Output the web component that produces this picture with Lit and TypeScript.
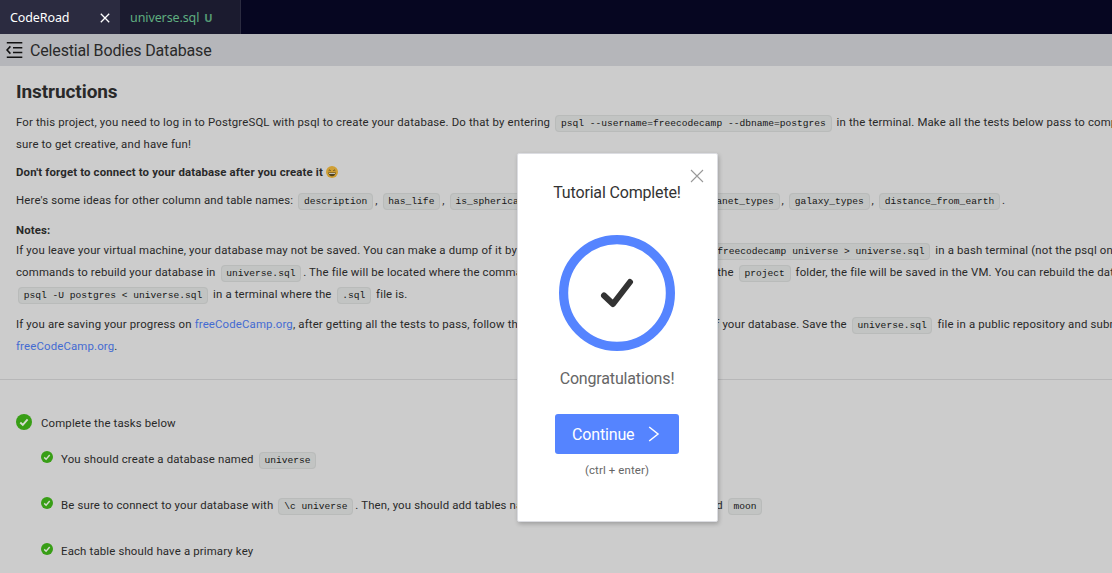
import { LitElement, html, css, svg } from "lit";
import { customElement, property } from "lit/decorators.js";

@customElement("done-badge")
class DoneBadge extends LitElement {
  @property({ type: Number }) size = 12;
  static styles = css`
    :host { display: block; line-height: 0; }
  `;
  render() {
    return html`<svg width=${this.size} height=${this.size} viewBox="0 0 16 16">
      ${svg`<circle cx="8" cy="8" r="8" fill="#389e16"/>
      <path d="M4.3 8.5 L6.8 10.9 L11.6 5.4" fill="none" stroke="#d4dccf" stroke-width="1.9"/>`}
    </svg>`;
  }
}

@customElement("app-root")
class AppRoot extends LitElement {
  static styles = css`
    :host {
      display: block;
      position: relative;
      width: 100%;
      height: 100vh;
      overflow: hidden;
      background: #cccccc;
      color: #292929;
      font-family: Roboto, sans-serif;
      font-size: 11.4px;
      letter-spacing: 0.155px;
    }
    * { box-sizing: border-box; }
    .tabs {
      display: flex;
      height: 34px;
      background: #060621;
      font-family: "Noto Sans", sans-serif;
      font-size: 12.5px;
      letter-spacing: -0.1px;
      line-height: 34px;
    }
    .tab {
      display: flex;
      align-items: center;
      width: 120px;
      padding: 1px 10px 0;
      background: #2b2b40;
      color: #ffffff;
      justify-content: space-between;
    }
    .tab.idle {
      width: 121px;
      background: #1b1b2f;
      border-right: 1px solid #2b2b40;
      color: #5fae80;
      justify-content: flex-start;
      gap: 5px;
    }
    .flag { font-size: 11px; font-weight: 700; opacity: .85; }
    .head {
      display: flex;
      align-items: center;
      height: 32px;
      padding-left: 6px;
      gap: 7px;
      background: #b5b6ba;
      font-size: 16px;
      letter-spacing: -0.16px;
    }
    .body { padding: 14px 16px 0; height: 314px; border-bottom: 1px solid #b7b7b8; }
    h1 { margin: 0 0 8px; font-size: 19px; line-height: 23px; font-weight: 700; letter-spacing: -0.08px; }
    p { margin: 0 0 8px; }
    .line { display: block; height: 22px; line-height: 22px; white-space: nowrap; }
    .short { height: 18px; line-height: 18px; }
    p.tight { margin: 0; }
    p.wide { margin: 0 0 10px; }
    p.emph { margin: 0 0 8px; height: 18px; line-height: 18px; display: flex; align-items: center; gap: 3px; }
    b { font-weight: 700; }
    code {
      font-family: "Liberation Mono", monospace;
      font-size: 9.6px;
      letter-spacing: 0;
      margin: 0 2px;
      padding: 2.4px 4.8px;
      border: 1px solid #b9bbba;
      border-radius: 4px;
      background: #c2c4c3;
      color: #151515;
    }
    a { color: #446bd2; }
    .tasks { padding: 32px 16px 0; }
    .task { display: flex; align-items: center; gap: 9px; height: 22px; line-height: 22px; white-space: nowrap; }
    .task code { line-height: 0; }
    .task done-badge { margin-top: -3px; }
    .sub { padding-left: 25px; gap: 8px; margin-top: 24px; }
    .task.sub done-badge { margin-top: -4px; }
    .sub.first { margin-top: 14px; }
    .modal {
      position: absolute;
      left: 517px;
      top: 153px;
      width: 201px;
      height: 369px;
      padding-right: 1px;
      display: flex;
      flex-direction: column;
      align-items: center;
      background: #fff;
      border: 1px solid #dcdde2;
      border-radius: 2px;
      box-shadow: 1px 2px 4px rgba(0, 0, 0, .22);
      letter-spacing: -0.16px;
      font-size: 16px;
      color: #333;
    }
    .close { position: absolute; right: 13px; top: 15px; }
    .title { margin-top: 28px; line-height: 22px; }
    .ring { margin-top: 31px; display: block; }
    .congrats { margin-top: 17px; line-height: 22px; color: #666; }
    .go {
      display: flex;
      align-items: center;
      gap: 14px;
      width: 124px;
      height: 40px;
      margin-top: 24px;
      padding-left: 17px;
      border-radius: 3px;
      background: #5584ff;
      color: #fff;
    }
    .hint { margin-top: 7px; line-height: 18px; font-size: 11.4px; letter-spacing: .14px; color: #666; }
  `;

  private columns = ["description", "has_life", "is_spherical", "age_in_millions_of_years", "planet_types", "galaxy_types", "distance_from_earth"];

  render() {
    return html`
      <div class="tabs">
        <div class="tab"><span>CodeRoad</span>
          <svg width="10" height="10" viewBox="0 0 10 10"><path d="M.8 .8 L9.2 9.2 M9.2 .8 L.8 9.2" stroke="#fff" stroke-width="1.3"/></svg>
        </div>
        <div class="tab idle"><span>universe.sql</span><span class="flag">U</span></div>
      </div>
      <div class="head">
        <svg width="17" height="18" viewBox="0 0 17 18" fill="none" stroke="#111" stroke-width="1.6">
          <path d="M.8 1.8 H16.3 M7 6.7 H16.3 M7 11.5 H16.3 M.8 16.3 H16.3 M4.4 5.4 L1 9 L4.4 12.6"/>
        </svg>
        <span>Celestial Bodies Database</span>
      </div>
      <div class="body">
        <h1>Instructions</h1>
        <p>
          <span class="line">For this project, you need to log in to PostgreSQL with psql to create your database. Do that by entering <code>psql --username=freecodecamp --dbname=postgres</code> in the terminal. Make all the tests below pass to complete the project. Be</span>
          <span class="line">sure to get creative, and have fun!</span>
        </p>
        <p class="emph"><b>Don't forget to connect to your database after you create it</b>
          <svg width="12" height="12" viewBox="0 0 12 12"><circle cx="6" cy="6" r="6" fill="#cf9f35"/><path d="M2.7 4.7 Q3.7 3.4 4.7 4.7 M7.3 4.7 Q8.3 3.4 9.3 4.7" fill="none" stroke="#51431f" stroke-width=".9"/><path d="M2.2 6.6 H9.8 Q9.2 10.3 6 10.3 Q2.8 10.3 2.2 6.6Z" fill="#51431f"/><path d="M3 7 H9 V7.9 H3Z" fill="#cccccc"/></svg>
        </p>
        <p class="wide"><span class="line">Here's some ideas for other column and table names: ${this.columns.map((c, i) => html`${i ? ", " : ""}<code>${c}</code>`)}.</span></p>
        <p class="tight"><span class="line short"><b>Notes:</b></span></p>
        <p>
          <span class="line">If you leave your virtual machine, your database may not be saved. You can make a dump of it by entering <code>pg_dump -cC --inserts -U freecodecamp universe &gt; universe.sql</code> in a bash terminal (not the psql one). It will save the</span>
          <span class="line">commands to rebuild your database in <code>universe.sql</code>. The file will be located where the command was entered. If it's anything inside the <code>project</code> folder, the file will be saved in the VM. You can rebuild the database by entering</span>
          <span class="line"><code>psql -U postgres &lt; universe.sql</code> in a terminal where the <code>.sql</code> file is.</span>
        </p>
        <p>
          <span class="line">If you are saving your progress on <a>freeCodeCamp.org</a>, after getting all the tests to pass, follow the instructions above to save a dump of your database. Save the <code>universe.sql</code> file in a public repository and submit the URL to it on</span>
          <span class="line"><a>freeCodeCamp.org</a>.</span>
        </p>
      </div>
      <div class="tasks">
        <div class="task"><done-badge .size=${16}></done-badge><span>Complete the tasks below</span></div>
        <div class="task sub first"><done-badge></done-badge><span>You should create a database named <code>universe</code></span></div>
        <div class="task sub"><done-badge></done-badge><span>Be sure to connect to your database with <code>\\c universe</code>. Then, you should add tables named <code>galaxy</code>, <code>star</code>, <code>planet</code>, and <code>moon</code></span></div>
        <div class="task sub"><done-badge></done-badge><span>Each table should have a primary key</span></div>
      </div>
      <div class="modal">
        <svg class="close" width="14" height="14" viewBox="0 0 14 14"><path d="M1 1 L13 13 M13 1 L1 13" stroke="#999" stroke-width="1.1"/></svg>
        <div class="title">Tutorial Complete!</div>
        <svg class="ring" width="116" height="116" viewBox="0 0 116 116" fill="none">
          <circle cx="58" cy="58" r="53.4" stroke="#5584ff" stroke-width="9.2"/>
          <path d="M45 60.5 L54 69 L71 47" stroke="#333" stroke-width="6" stroke-linecap="round" stroke-linejoin="round"/>
        </svg>
        <div class="congrats">Congratulations!</div>
        <div class="go"><span>Continue</span>
          <svg width="12" height="16" viewBox="0 0 12 16"><path d="M1.2 1 L10 8 L1.2 15" fill="none" stroke="#fff" stroke-width="1.5"/></svg>
        </div>
        <div class="hint">(ctrl + enter)</div>
      </div>`;
  }
}
